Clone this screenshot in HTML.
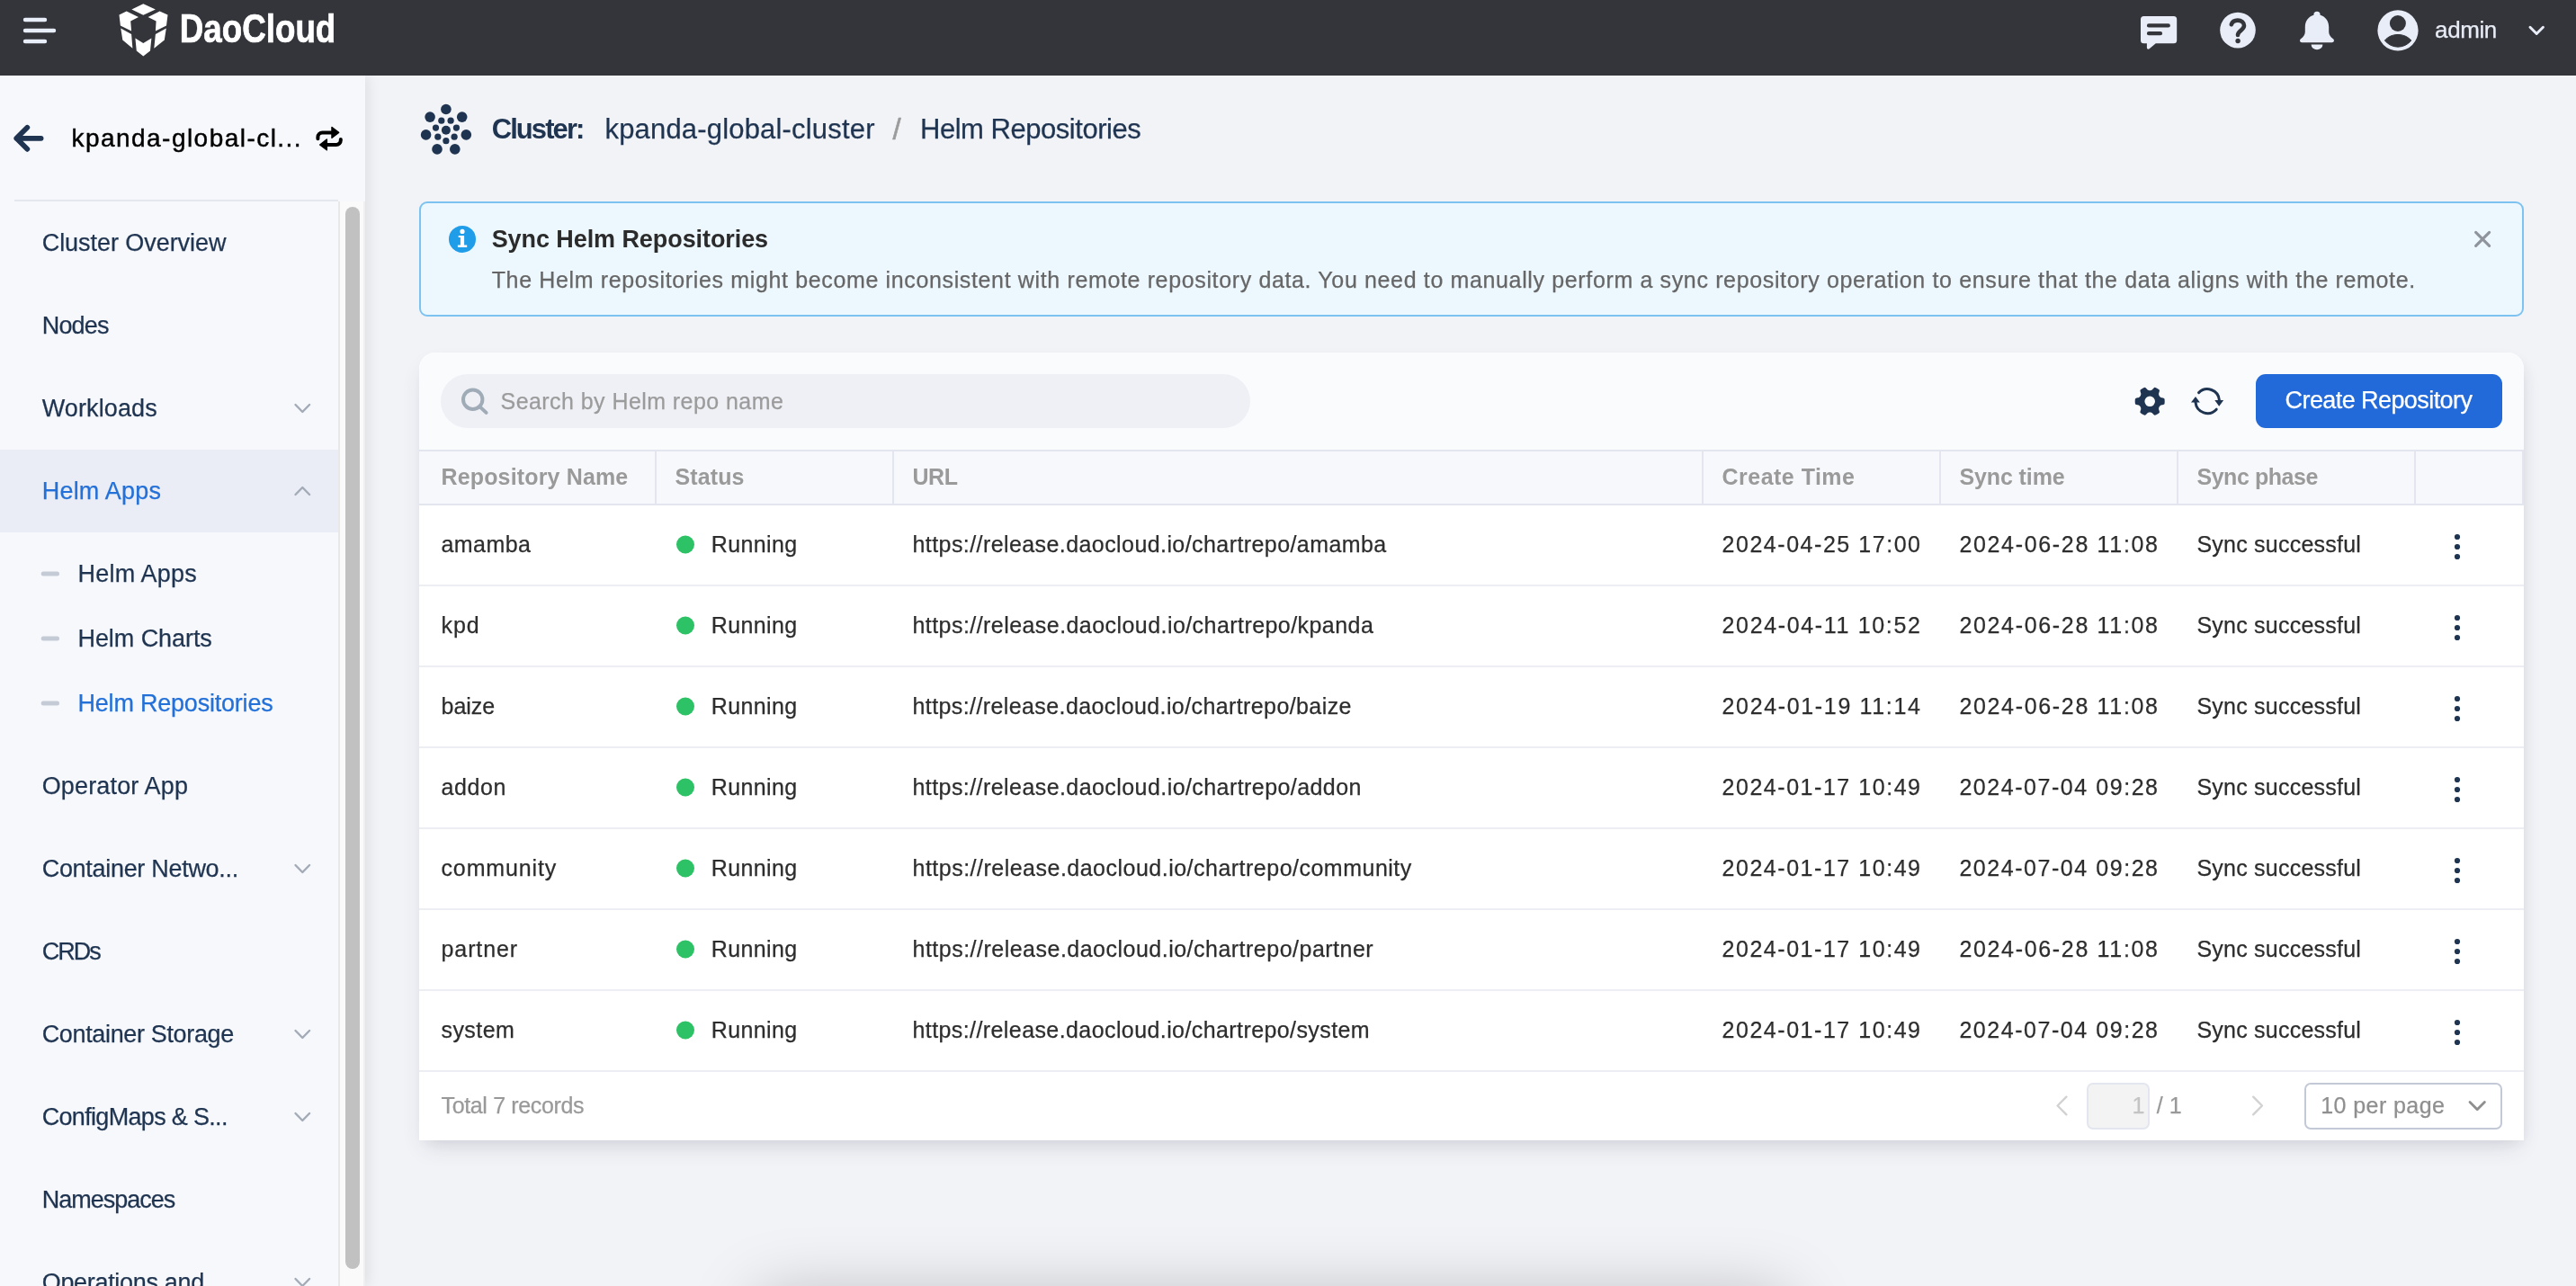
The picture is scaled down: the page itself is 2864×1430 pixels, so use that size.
<!DOCTYPE html>
<html lang="en"><head><meta charset="utf-8"><title>Helm Repositories</title>
<style>
html,body{margin:0;padding:0}
body{width:2864px;height:1430px;overflow:hidden;position:relative;background:#f2f3f7;font-family:"Liberation Sans",sans-serif}
.t{position:absolute;white-space:nowrap;line-height:normal;-webkit-text-stroke:0.25px currentColor}
.abs{position:absolute}
#hdr{left:0;top:0;width:2864px;height:84px;background:#34353b}
#side{left:0;top:84px;width:406px;height:1346px;background:#f7f8fc;box-shadow:3px 0 14px rgba(0,0,0,.085)}
#act{left:0;top:500px;width:376px;height:92px;background:#eaedf6}
#sline{left:16px;top:222px;width:360px;height:2px;background:#e4e7ee}
#vline{left:376px;top:224px;width:26px;height:1206px;background:#fafafa;border-left:2px solid #e8e8e9;border-right:2px solid #efeff0}
#thumb{left:384px;top:230px;width:16px;height:1181px;border-radius:8px;background:#c1c1c1}
#alert{left:466px;top:224px;width:2336px;height:124px;border:2px solid #7cc3f1;border-radius:9px;background:#edf7fe}
#card{left:466px;top:392px;width:2340px;height:876px;background:#fff;border-radius:18px 18px 0 0;box-shadow:0 12px 26px -6px rgba(50,55,75,.14),4px 6px 16px -6px rgba(50,55,75,.09);overflow:hidden}
#tool{left:0;top:0;width:2340px;height:108px;background:#fafbfd}
#thead{left:0;top:108px;width:2338px;height:58px;background:#f7f8fb;border-top:2px solid #e3e6ef;border-bottom:2px solid #e3e6ef;border-right:2px solid #e3e6ef}
.cs{position:absolute;top:502px;width:2px;height:58px;background:#e3e6ef}
.rl{position:absolute;left:466px;width:2340px;height:2px;background:#eceef3}
#search{left:490px;top:416px;width:900px;height:60px;border-radius:30px;background:#eff0f5}
#btn{left:2508px;top:416px;width:274px;height:60px;border-radius:11px;background:#2269d9}
#pgin{left:2320px;top:1204px;width:66px;height:48px;border:2px solid #e3e6ef;border-radius:7px;background:#f3f3f4}
#pgsel{left:2562px;top:1204px;width:216px;height:48px;border:2px solid #c3c9d7;border-radius:7px;background:#fff}
#bshadow{left:850px;top:1450px;width:1130px;height:60px;border-radius:12px;background:#888;box-shadow:0 0 75px 8px rgba(0,0,0,.25)}
#tx{position:absolute;left:0;top:0;width:2864px;height:1430px;will-change:transform}
svg{position:absolute;left:0;top:0;overflow:visible;will-change:transform}
</style></head><body>
<div class="abs" id="bshadow"></div>
<div class="abs" id="side"></div>
<div class="abs" id="act"></div>
<div class="abs" id="sline"></div>
<div class="abs" id="vline"></div>
<div class="abs" id="thumb"></div>
<div class="abs" id="hdr"></div>
<div class="abs" id="alert"></div>
<div class="abs" id="card"><div class="abs" id="tool"></div><div class="abs" id="thead"></div></div>
<div class="cs" style="left:728px"></div><div class="cs" style="left:992px"></div><div class="cs" style="left:1892px"></div><div class="cs" style="left:2156px"></div><div class="cs" style="left:2420px"></div><div class="cs" style="left:2684px"></div>
<div class="rl" style="top:650px"></div><div class="rl" style="top:740px"></div><div class="rl" style="top:830px"></div><div class="rl" style="top:920px"></div><div class="rl" style="top:1010px"></div><div class="rl" style="top:1100px"></div><div class="rl" style="top:1190px"></div>
<div class="abs" id="search"></div>
<div class="abs" id="btn"></div>
<div class="abs" id="pgin"></div>
<div class="abs" id="pgsel"></div>
<svg width="2864" height="1430" viewBox="0 0 2864 1430">
<!-- hamburger -->
<g stroke="#e9eefb" stroke-width="4.4" stroke-linecap="round"><path d="M28,22H50M28,34H60M28,46H50"/></g>
<!-- logo cube -->
<g fill="#fff">
<polygon points="159.3,4.3 172.9,10.5 159.3,16.8 146.4,10.5"/>
<polygon points="140.7,12.5 154,19 145.2,23.4 146.1,34.6 133.9,28.5 132.5,16.5"/>
<polygon points="177.6,12.5 186.5,16.5 185,28.5 172.9,34.6 173.6,23.4 164.6,19"/>
<polygon points="134.3,31.5 146.1,38 147.4,53.8 136.3,44.6"/>
<polygon points="184.8,31.5 172.9,38 171.3,53.8 182.8,44.6"/>
<polygon points="150.4,42.4 159.3,48 168.4,42.4 167,56.5 159.3,62.5 151.8,56.5"/>
</g>
<text x="199.8" y="46.5" font-family="Liberation Sans, sans-serif" font-weight="700" font-size="44" fill="#fff" stroke="#fff" stroke-width="0.7" textLength="173.5" lengthAdjust="spacingAndGlyphs">DaoCloud</text>
<!-- header icons -->
<g fill="#e9edf7">
<path d="M2383.5,18H2416.7a3.5,3.5 0 0 1 3.5,3.5V44.7a3.5,3.5 0 0 1 -3.5,3.5H2396.8L2389.6,54.2a1.6,1.6 0 0 1 -2.7,-1.2V48.2H2383.5a3.5,3.5 0 0 1 -3.5,-3.5V21.5a3.5,3.5 0 0 1 3.5,-3.5Z"/>
<circle cx="2488" cy="33.6" r="19.8"/>
<path d="M2576,12.8a3.6,3.6 0 0 1 3.6,3.6v0.3c5.8,1.6 9.6,6.8 9.6,13v5.8c0,3 1.6,5.2 4.8,7.8c1.7,1.5 1.1,3.9 -1.3,3.9h-33.4c-2.4,0 -3,-2.4 -1.3,-3.9c3.2,-2.6 4.8,-4.8 4.8,-7.8v-5.8c0,-6.2 3.8,-11.4 9.6,-13v-0.3a3.6,3.6 0 0 1 3.6,-3.6Z"/>
<path d="M2569.6,49.6h12.8a6.4,5.6 0 0 1 -12.8,0Z"/>
<circle cx="2666" cy="33.9" r="22.6"/>
</g>
<g stroke="#34353b" stroke-width="4.2" stroke-linecap="round" fill="none">
<path d="M2389,28.4H2410.8M2389,37.2H2402"/>
<path d="M2480.8,27.2c1,-3 3.8,-4.6 7,-4.6c4.2,0 7.2,2.6 7.2,6c0,5 -7,5.6 -7,10.4" stroke-width="4.6"/>
</g>
<circle cx="2488.1" cy="45.5" r="2.7" fill="#34353b"/>
<circle cx="2665.9" cy="26" r="9" fill="#34353b"/>
<path d="M2651.4,45C2655,40.6 2660.4,38.5 2666,38.5C2671.6,38.5 2677,40.6 2680.8,45A18.7,18.7 0 0 1 2651.4,45Z" fill="#34353b" stroke="#34353b" stroke-width="1" stroke-linejoin="round"/>
<path d="M2813,30.3L2820.2,37.5L2827.4,30.3" stroke="#e9edf7" stroke-width="3" fill="none" stroke-linecap="round" stroke-linejoin="round"/>
<!-- back arrow -->
<path d="M30.3,141.8L18.3,153.8L30.3,165.8M18.3,153.8H45.6" stroke="#1f3450" stroke-width="5.8" fill="none" stroke-linecap="round" stroke-linejoin="round"/>
<!-- swap icon -->
<g stroke="#000" stroke-width="4" fill="none" stroke-linecap="round" stroke-linejoin="round">
<path d="M353.4,154.2v-1.8a5,5 0 0 1 5,-5H370"/>
<path d="M378.8,155v1a5,5 0 0 1 -5,5H362.5"/>
</g>
<path d="M369,141.6L376.6,147.4L369,153.2Z" fill="#000" stroke="#000" stroke-width="1.5" stroke-linejoin="round"/>
<path d="M363.3,155.1L355.7,161L363.3,166.7Z" fill="#000" stroke="#000" stroke-width="1.5" stroke-linejoin="round"/>
<path d="M328.5,450L336.3,458L344.1,450" stroke="#a3abb7" stroke-width="2.4" fill="none" stroke-linecap="round" stroke-linejoin="round"/><path d="M328.5,550L336.3,542L344.1,550" stroke="#a3abb7" stroke-width="2.4" fill="none" stroke-linecap="round" stroke-linejoin="round"/><path d="M328.5,962L336.3,970L344.1,962" stroke="#a3abb7" stroke-width="2.4" fill="none" stroke-linecap="round" stroke-linejoin="round"/><path d="M328.5,1146L336.3,1154L344.1,1146" stroke="#a3abb7" stroke-width="2.4" fill="none" stroke-linecap="round" stroke-linejoin="round"/><path d="M328.5,1238L336.3,1246L344.1,1238" stroke="#a3abb7" stroke-width="2.4" fill="none" stroke-linecap="round" stroke-linejoin="round"/><path d="M328.5,1422L336.3,1430L344.1,1422" stroke="#a3abb7" stroke-width="2.4" fill="none" stroke-linecap="round" stroke-linejoin="round"/>
<rect x="45.7" y="635.5" width="20.3" height="5" rx="2.5" fill="#c5cbd6"/><rect x="45.7" y="707.5" width="20.3" height="5" rx="2.5" fill="#c5cbd6"/><rect x="45.7" y="779.5" width="20.3" height="5" rx="2.5" fill="#c5cbd6"/>
<!-- cluster icon -->
<g fill="#1f3450">
<circle cx="495.9" cy="144.7" r="5"/>
<circle cx="495.9" cy="121.5" r="5.8"/><circle cx="513.7" cy="130.1" r="5.8"/><circle cx="518.3" cy="149.9" r="5.8"/><circle cx="505.8" cy="165.9" r="5.8"/><circle cx="486" cy="165.9" r="5.8"/><circle cx="473.6" cy="149.9" r="5.8"/><circle cx="478.1" cy="130.1" r="5.8"/>
<circle cx="490.8" cy="134.2" r="3.6"/><circle cx="501.1" cy="134.2" r="3.6"/><circle cx="507.4" cy="142.1" r="3.6"/><circle cx="505.1" cy="152.2" r="3.6"/><circle cx="495.9" cy="156.7" r="3.6"/><circle cx="486.8" cy="152.2" r="3.6"/><circle cx="484.5" cy="142.1" r="3.6"/>
</g>
<!-- info icon -->
<circle cx="514" cy="265.9" r="15" fill="#209de9"/>
<circle cx="514" cy="257.4" r="2.6" fill="#fff"/>
<path d="M509.7,261.9H516.1V272.6H519.2V274.9H508.9V272.6H511.9V264H509.7Z" fill="#fff"/>
<!-- close x -->
<path d="M2752.6,258.4L2767.6,273.4M2767.6,258.4L2752.6,273.4" stroke="#8e939c" stroke-width="3.1" stroke-linecap="round"/>
<!-- search icon -->
<circle cx="525.7" cy="444.2" r="10.7" stroke="#a0abb8" stroke-width="4" fill="none"/>
<path d="M533.6,452.4L540.6,458.9" stroke="#a0abb8" stroke-width="4" stroke-linecap="round"/>
<!-- gear -->
<path d="M2406.70,446.30L2406.70,446.59L2406.69,446.88L2406.68,447.16L2406.66,447.45L2406.64,447.74L2406.61,448.02L2406.58,448.31L2406.54,448.60L2406.50,448.88L2406.45,449.17L2406.23,449.42L2405.89,449.64L2405.47,449.83L2405.00,449.99L2404.49,450.13L2403.95,450.24L2403.38,450.33L2402.95,450.44L2402.62,450.58L2402.35,450.72L2402.10,450.87L2401.89,451.02L2401.69,451.18L2401.51,451.34L2401.35,451.50L2401.20,451.66L2401.06,451.83L2400.93,452.01L2400.81,452.18L2400.70,452.36L2400.60,452.55L2400.51,452.74L2400.42,452.94L2400.35,453.14L2400.28,453.36L2400.22,453.58L2400.17,453.81L2400.13,454.06L2400.11,454.32L2400.10,454.61L2400.12,454.92L2400.16,455.27L2400.28,455.70L2400.49,456.24L2400.66,456.76L2400.80,457.28L2400.89,457.76L2400.93,458.22L2400.92,458.63L2400.81,458.94L2400.58,459.12L2400.36,459.30L2400.13,459.48L2399.90,459.65L2399.66,459.82L2399.43,459.98L2399.19,460.14L2398.94,460.29L2398.70,460.44L2398.45,460.59L2398.20,460.73L2397.95,460.87L2397.69,461.00L2397.43,461.13L2397.17,461.25L2396.91,461.37L2396.65,461.49L2396.38,461.60L2396.11,461.70L2395.84,461.80L2395.52,461.75L2395.16,461.56L2394.78,461.29L2394.41,460.97L2394.03,460.59L2393.66,460.18L2393.30,459.73L2392.99,459.42L2392.71,459.20L2392.44,459.03L2392.19,458.89L2391.95,458.78L2391.72,458.69L2391.49,458.62L2391.27,458.56L2391.05,458.51L2390.84,458.47L2390.62,458.45L2390.41,458.43L2390.20,458.43L2389.99,458.43L2389.78,458.45L2389.56,458.47L2389.35,458.51L2389.13,458.56L2388.91,458.62L2388.68,458.69L2388.45,458.78L2388.21,458.89L2387.96,459.03L2387.69,459.20L2387.41,459.42L2387.10,459.73L2386.74,460.18L2386.37,460.59L2385.99,460.97L2385.62,461.29L2385.24,461.56L2384.88,461.75L2384.56,461.80L2384.29,461.70L2384.02,461.60L2383.75,461.49L2383.49,461.37L2383.23,461.25L2382.97,461.13L2382.71,461.00L2382.45,460.87L2382.20,460.73L2381.95,460.59L2381.70,460.44L2381.46,460.29L2381.21,460.14L2380.97,459.98L2380.74,459.82L2380.50,459.65L2380.27,459.48L2380.04,459.30L2379.82,459.12L2379.59,458.94L2379.48,458.63L2379.47,458.22L2379.51,457.76L2379.60,457.28L2379.74,456.76L2379.91,456.24L2380.12,455.70L2380.24,455.27L2380.28,454.92L2380.30,454.61L2380.29,454.32L2380.27,454.06L2380.23,453.81L2380.18,453.58L2380.12,453.36L2380.05,453.14L2379.98,452.94L2379.89,452.74L2379.80,452.55L2379.70,452.36L2379.59,452.18L2379.47,452.01L2379.34,451.83L2379.20,451.66L2379.05,451.50L2378.89,451.34L2378.71,451.18L2378.51,451.02L2378.30,450.87L2378.05,450.72L2377.78,450.58L2377.45,450.44L2377.02,450.33L2376.45,450.24L2375.91,450.13L2375.40,449.99L2374.93,449.83L2374.51,449.64L2374.17,449.42L2373.95,449.17L2373.90,448.88L2373.86,448.60L2373.82,448.31L2373.79,448.02L2373.76,447.74L2373.74,447.45L2373.72,447.16L2373.71,446.88L2373.70,446.59L2373.70,446.30L2373.70,446.01L2373.71,445.72L2373.72,445.44L2373.74,445.15L2373.76,444.86L2373.79,444.58L2373.82,444.29L2373.86,444.00L2373.90,443.72L2373.95,443.43L2374.17,443.18L2374.51,442.96L2374.93,442.77L2375.40,442.61L2375.91,442.47L2376.45,442.36L2377.02,442.27L2377.45,442.16L2377.78,442.02L2378.05,441.88L2378.30,441.73L2378.51,441.58L2378.71,441.42L2378.89,441.26L2379.05,441.10L2379.20,440.94L2379.34,440.77L2379.47,440.59L2379.59,440.42L2379.70,440.24L2379.80,440.05L2379.89,439.86L2379.98,439.66L2380.05,439.46L2380.12,439.24L2380.18,439.02L2380.23,438.79L2380.27,438.54L2380.29,438.28L2380.30,437.99L2380.28,437.68L2380.24,437.33L2380.12,436.90L2379.91,436.36L2379.74,435.84L2379.60,435.32L2379.51,434.84L2379.47,434.38L2379.48,433.97L2379.59,433.66L2379.82,433.48L2380.04,433.30L2380.27,433.12L2380.50,432.95L2380.74,432.78L2380.97,432.62L2381.21,432.46L2381.46,432.31L2381.70,432.16L2381.95,432.01L2382.20,431.87L2382.45,431.73L2382.71,431.60L2382.97,431.47L2383.23,431.35L2383.49,431.23L2383.75,431.11L2384.02,431.00L2384.29,430.90L2384.56,430.80L2384.88,430.85L2385.24,431.04L2385.62,431.31L2385.99,431.63L2386.37,432.01L2386.74,432.42L2387.10,432.87L2387.41,433.18L2387.69,433.40L2387.96,433.57L2388.21,433.71L2388.45,433.82L2388.68,433.91L2388.91,433.98L2389.13,434.04L2389.35,434.09L2389.56,434.13L2389.78,434.15L2389.99,434.17L2390.20,434.17L2390.41,434.17L2390.62,434.15L2390.84,434.13L2391.05,434.09L2391.27,434.04L2391.49,433.98L2391.72,433.91L2391.95,433.82L2392.19,433.71L2392.44,433.57L2392.71,433.40L2392.99,433.18L2393.30,432.87L2393.66,432.42L2394.03,432.01L2394.41,431.63L2394.78,431.31L2395.16,431.04L2395.52,430.85L2395.84,430.80L2396.11,430.90L2396.38,431.00L2396.65,431.11L2396.91,431.23L2397.17,431.35L2397.43,431.47L2397.69,431.60L2397.95,431.73L2398.20,431.87L2398.45,432.01L2398.70,432.16L2398.94,432.31L2399.19,432.46L2399.43,432.62L2399.66,432.78L2399.90,432.95L2400.13,433.12L2400.36,433.30L2400.58,433.48L2400.81,433.66L2400.92,433.97L2400.93,434.38L2400.89,434.84L2400.80,435.32L2400.66,435.84L2400.49,436.36L2400.28,436.90L2400.16,437.33L2400.12,437.68L2400.10,437.99L2400.11,438.28L2400.13,438.54L2400.17,438.79L2400.22,439.02L2400.28,439.24L2400.35,439.46L2400.42,439.66L2400.51,439.86L2400.60,440.05L2400.70,440.24L2400.81,440.42L2400.93,440.59L2401.06,440.77L2401.20,440.94L2401.35,441.10L2401.51,441.26L2401.69,441.42L2401.89,441.58L2402.10,441.73L2402.35,441.88L2402.62,442.02L2402.95,442.16L2403.38,442.27L2403.95,442.36L2404.49,442.47L2405.00,442.61L2405.47,442.77L2405.89,442.96L2406.23,443.18L2406.45,443.43L2406.50,443.72L2406.54,444.00L2406.58,444.29L2406.61,444.58L2406.64,444.86L2406.66,445.15L2406.68,445.44L2406.69,445.72L2406.70,446.01ZM2396.00,446.30A5.8,5.8 0 1,0 2384.40,446.30A5.8,5.8 0 1,0 2396.00,446.30Z" fill="#1f3450" fill-rule="evenodd"/>
<!-- refresh -->
<g stroke="#1f3450" stroke-width="3" fill="none" stroke-linecap="round">
<path d="M2444.6,436.6A13.4,13.4 0 0 1 2467.4,445"/>
<path d="M2441,447.4A13.4,13.4 0 0 0 2464.2,455.2"/>
</g>
<path d="M2462.3,445H2472.2L2467.2,451.7Z" fill="#1f3450"/>
<path d="M2436,447.6H2445.9L2441,440.9Z" fill="#1f3450"/>
<!-- status dots -->
<g fill="#2dc265"><circle cx="762" cy="605.5" r="10"/><circle cx="762" cy="695.5" r="10"/><circle cx="762" cy="785.5" r="10"/><circle cx="762" cy="875.5" r="10"/><circle cx="762" cy="965.5" r="10"/><circle cx="762" cy="1055.5" r="10"/><circle cx="762" cy="1145.5" r="10"/></g>
<g fill="#1f3450"><circle cx="2732" cy="597" r="3.1"/><circle cx="2732" cy="608" r="3.1"/><circle cx="2732" cy="619" r="3.1"/><circle cx="2732" cy="687" r="3.1"/><circle cx="2732" cy="698" r="3.1"/><circle cx="2732" cy="709" r="3.1"/><circle cx="2732" cy="777" r="3.1"/><circle cx="2732" cy="788" r="3.1"/><circle cx="2732" cy="799" r="3.1"/><circle cx="2732" cy="867" r="3.1"/><circle cx="2732" cy="878" r="3.1"/><circle cx="2732" cy="889" r="3.1"/><circle cx="2732" cy="957" r="3.1"/><circle cx="2732" cy="968" r="3.1"/><circle cx="2732" cy="979" r="3.1"/><circle cx="2732" cy="1047" r="3.1"/><circle cx="2732" cy="1058" r="3.1"/><circle cx="2732" cy="1069" r="3.1"/><circle cx="2732" cy="1137" r="3.1"/><circle cx="2732" cy="1148" r="3.1"/><circle cx="2732" cy="1159" r="3.1"/></g>
<!-- pagination arrows -->
<path d="M2297.4,1219.7L2287.6,1229.5L2297.4,1239.3" stroke="#d2d2d2" stroke-width="2.4" fill="none" stroke-linecap="round" stroke-linejoin="round"/>
<path d="M2505.2,1219.7L2515,1229.5L2505.2,1239.3" stroke="#d2d2d2" stroke-width="2.4" fill="none" stroke-linecap="round" stroke-linejoin="round"/>
<path d="M2746,1225.5L2754.2,1233.7L2762.4,1225.5" stroke="#8f8f8f" stroke-width="2.8" fill="none" stroke-linecap="round" stroke-linejoin="round"/>
</svg>
<div id="tx"><div class="t " style="left:46.7px;top:255.0px;font-size:27px;color:#1f3450;letter-spacing:-0.05px;">Cluster Overview</div>
<div class="t " style="left:46.7px;top:347.0px;font-size:27px;color:#1f3450;letter-spacing:-0.81px;">Nodes</div>
<div class="t " style="left:46.7px;top:439.0px;font-size:27px;color:#1f3450;letter-spacing:0.12px;">Workloads</div>
<div class="t " style="left:46.7px;top:531.0px;font-size:27px;color:#2370d8;letter-spacing:0.22px;">Helm Apps</div>
<div class="t " style="left:86.5px;top:623.0px;font-size:27px;color:#1f3450;letter-spacing:0.22px;">Helm Apps</div>
<div class="t " style="left:86.5px;top:695.0px;font-size:27px;color:#1f3450;letter-spacing:-0.07px;">Helm Charts</div>
<div class="t " style="left:86.5px;top:767.0px;font-size:27px;color:#2370d8;letter-spacing:-0.21px;">Helm Repositories</div>
<div class="t " style="left:46.7px;top:859.0px;font-size:27px;color:#1f3450;letter-spacing:0.15px;">Operator App</div>
<div class="t " style="left:46.7px;top:951.0px;font-size:27px;color:#1f3450;letter-spacing:-0.30px;">Container Netwo...</div>
<div class="t " style="left:46.7px;top:1043.0px;font-size:27px;color:#1f3450;letter-spacing:-2.00px;">CRDs</div>
<div class="t " style="left:46.7px;top:1135.0px;font-size:27px;color:#1f3450;letter-spacing:-0.35px;">Container Storage</div>
<div class="t " style="left:46.7px;top:1227.0px;font-size:27px;color:#1f3450;letter-spacing:-0.68px;">ConfigMaps &amp; S...</div>
<div class="t " style="left:46.7px;top:1319.0px;font-size:27px;color:#1f3450;letter-spacing:-1.00px;">Namespaces</div>
<div class="t " style="left:46.7px;top:1411.0px;font-size:27px;color:#1f3450;letter-spacing:-0.31px;">Operations and</div>
<div class="t " style="left:79.5px;top:138.0px;font-size:28px;color:#000;letter-spacing:1.46px;-webkit-text-stroke:0.45px currentColor;">kpanda-global-cl...</div>
<div class="t " style="left:2707.1px;top:17.7px;font-size:26px;color:#e9edf7;letter-spacing:-0.40px;">admin</div>
<div class="t " style="left:546.7px;top:126.0px;font-size:31px;color:#1f3450;letter-spacing:-1.92px;font-weight:700;-webkit-text-stroke:0;">Cluster:</div>
<div class="t " style="left:672.5px;top:126.0px;font-size:31px;color:#1f3450;letter-spacing:0.18px;">kpanda-global-cluster</div>
<div class="t " style="left:992.6px;top:124.6px;font-size:33px;color:#9b9b9b;-webkit-text-stroke:0.6px currentColor;">/</div>
<div class="t " style="left:1023.0px;top:126.0px;font-size:31px;color:#1f3450;letter-spacing:-0.47px;">Helm Repositories</div>
<div class="t " style="left:546.7px;top:251.4px;font-size:27px;color:#2b2b2b;letter-spacing:-0.08px;font-weight:700;-webkit-text-stroke:0;">Sync Helm Repositories</div>
<div class="t " style="left:546.7px;top:297.0px;font-size:25px;color:#666;letter-spacing:0.64px;">The Helm repositories might become inconsistent with remote repository data. You need to manually perform a sync repository operation to ensure that the data aligns with the remote.</div>
<div class="t " style="left:556.6px;top:432.0px;font-size:25px;color:#9b9b9b;letter-spacing:0.43px;">Search by Helm repo name</div>
<div class="t " style="left:2540.6px;top:430.0px;font-size:27px;color:#fff;letter-spacing:-0.58px;">Create Repository</div>
<div class="t " style="left:490.5px;top:516.0px;font-size:25px;color:#9a9a9a;letter-spacing:0.15px;font-weight:700;-webkit-text-stroke:0;">Repository Name</div>
<div class="t " style="left:750.6px;top:516.0px;font-size:25px;color:#9a9a9a;letter-spacing:0.08px;font-weight:700;-webkit-text-stroke:0;">Status</div>
<div class="t " style="left:1014.5px;top:516.0px;font-size:25px;color:#9a9a9a;letter-spacing:-0.44px;font-weight:700;-webkit-text-stroke:0;">URL</div>
<div class="t " style="left:1914.5px;top:516.0px;font-size:25px;color:#9a9a9a;letter-spacing:0.48px;font-weight:700;-webkit-text-stroke:0;">Create Time</div>
<div class="t " style="left:2178.4px;top:516.0px;font-size:25px;color:#9a9a9a;letter-spacing:-0.10px;font-weight:700;-webkit-text-stroke:0;">Sync time</div>
<div class="t " style="left:2442.4px;top:516.0px;font-size:25px;color:#9a9a9a;letter-spacing:-0.43px;font-weight:700;-webkit-text-stroke:0;">Sync phase</div>
<div class="t " style="left:490.5px;top:591.0px;font-size:25px;color:#2d2d2d;letter-spacing:0.43px;">amamba</div>
<div class="t " style="left:790.7px;top:591.0px;font-size:25px;color:#2d2d2d;letter-spacing:0.41px;">Running</div>
<div class="t " style="left:1014.5px;top:591.0px;font-size:25px;color:#2d2d2d;letter-spacing:0.42px;">https://release.daocloud.io/chartrepo/amamba</div>
<div class="t " style="left:1914.5px;top:591.0px;font-size:25px;color:#2d2d2d;letter-spacing:1.54px;">2024-04-25 17:00</div>
<div class="t " style="left:2178.4px;top:591.0px;font-size:25px;color:#2d2d2d;letter-spacing:1.67px;">2024-06-28 11:08</div>
<div class="t " style="left:2442.4px;top:591.0px;font-size:25px;color:#2d2d2d;letter-spacing:0.23px;">Sync successful</div>
<div class="t " style="left:490.5px;top:681.0px;font-size:25px;color:#2d2d2d;letter-spacing:0.90px;">kpd</div>
<div class="t " style="left:790.7px;top:681.0px;font-size:25px;color:#2d2d2d;letter-spacing:0.41px;">Running</div>
<div class="t " style="left:1014.5px;top:681.0px;font-size:25px;color:#2d2d2d;letter-spacing:0.44px;">https://release.daocloud.io/chartrepo/kpanda</div>
<div class="t " style="left:1914.5px;top:681.0px;font-size:25px;color:#2d2d2d;letter-spacing:1.66px;">2024-04-11 10:52</div>
<div class="t " style="left:2178.4px;top:681.0px;font-size:25px;color:#2d2d2d;letter-spacing:1.67px;">2024-06-28 11:08</div>
<div class="t " style="left:2442.4px;top:681.0px;font-size:25px;color:#2d2d2d;letter-spacing:0.23px;">Sync successful</div>
<div class="t " style="left:490.5px;top:771.0px;font-size:25px;color:#2d2d2d;letter-spacing:-0.02px;">baize</div>
<div class="t " style="left:790.7px;top:771.0px;font-size:25px;color:#2d2d2d;letter-spacing:0.41px;">Running</div>
<div class="t " style="left:1014.5px;top:771.0px;font-size:25px;color:#2d2d2d;letter-spacing:0.40px;">https://release.daocloud.io/chartrepo/baize</div>
<div class="t " style="left:1914.5px;top:771.0px;font-size:25px;color:#2d2d2d;letter-spacing:1.66px;">2024-01-19 11:14</div>
<div class="t " style="left:2178.4px;top:771.0px;font-size:25px;color:#2d2d2d;letter-spacing:1.67px;">2024-06-28 11:08</div>
<div class="t " style="left:2442.4px;top:771.0px;font-size:25px;color:#2d2d2d;letter-spacing:0.23px;">Sync successful</div>
<div class="t " style="left:490.5px;top:861.0px;font-size:25px;color:#2d2d2d;letter-spacing:0.62px;">addon</div>
<div class="t " style="left:790.7px;top:861.0px;font-size:25px;color:#2d2d2d;letter-spacing:0.41px;">Running</div>
<div class="t " style="left:1014.5px;top:861.0px;font-size:25px;color:#2d2d2d;letter-spacing:0.43px;">https://release.daocloud.io/chartrepo/addon</div>
<div class="t " style="left:1914.5px;top:861.0px;font-size:25px;color:#2d2d2d;letter-spacing:1.54px;">2024-01-17 10:49</div>
<div class="t " style="left:2178.4px;top:861.0px;font-size:25px;color:#2d2d2d;letter-spacing:1.55px;">2024-07-04 09:28</div>
<div class="t " style="left:2442.4px;top:861.0px;font-size:25px;color:#2d2d2d;letter-spacing:0.23px;">Sync successful</div>
<div class="t " style="left:490.5px;top:951.0px;font-size:25px;color:#2d2d2d;letter-spacing:0.87px;">community</div>
<div class="t " style="left:790.7px;top:951.0px;font-size:25px;color:#2d2d2d;letter-spacing:0.41px;">Running</div>
<div class="t " style="left:1014.5px;top:951.0px;font-size:25px;color:#2d2d2d;letter-spacing:0.49px;">https://release.daocloud.io/chartrepo/community</div>
<div class="t " style="left:1914.5px;top:951.0px;font-size:25px;color:#2d2d2d;letter-spacing:1.54px;">2024-01-17 10:49</div>
<div class="t " style="left:2178.4px;top:951.0px;font-size:25px;color:#2d2d2d;letter-spacing:1.55px;">2024-07-04 09:28</div>
<div class="t " style="left:2442.4px;top:951.0px;font-size:25px;color:#2d2d2d;letter-spacing:0.23px;">Sync successful</div>
<div class="t " style="left:490.5px;top:1041.0px;font-size:25px;color:#2d2d2d;letter-spacing:0.91px;">partner</div>
<div class="t " style="left:790.7px;top:1041.0px;font-size:25px;color:#2d2d2d;letter-spacing:0.41px;">Running</div>
<div class="t " style="left:1014.5px;top:1041.0px;font-size:25px;color:#2d2d2d;letter-spacing:0.49px;">https://release.daocloud.io/chartrepo/partner</div>
<div class="t " style="left:1914.5px;top:1041.0px;font-size:25px;color:#2d2d2d;letter-spacing:1.54px;">2024-01-17 10:49</div>
<div class="t " style="left:2178.4px;top:1041.0px;font-size:25px;color:#2d2d2d;letter-spacing:1.67px;">2024-06-28 11:08</div>
<div class="t " style="left:2442.4px;top:1041.0px;font-size:25px;color:#2d2d2d;letter-spacing:0.23px;">Sync successful</div>
<div class="t " style="left:490.5px;top:1131.0px;font-size:25px;color:#2d2d2d;letter-spacing:0.42px;">system</div>
<div class="t " style="left:790.7px;top:1131.0px;font-size:25px;color:#2d2d2d;letter-spacing:0.41px;">Running</div>
<div class="t " style="left:1014.5px;top:1131.0px;font-size:25px;color:#2d2d2d;letter-spacing:0.41px;">https://release.daocloud.io/chartrepo/system</div>
<div class="t " style="left:1914.5px;top:1131.0px;font-size:25px;color:#2d2d2d;letter-spacing:1.54px;">2024-01-17 10:49</div>
<div class="t " style="left:2178.4px;top:1131.0px;font-size:25px;color:#2d2d2d;letter-spacing:1.55px;">2024-07-04 09:28</div>
<div class="t " style="left:2442.4px;top:1131.0px;font-size:25px;color:#2d2d2d;letter-spacing:0.23px;">Sync successful</div>
<div class="t " style="left:490.5px;top:1214.6px;font-size:25px;color:#999;letter-spacing:-0.35px;">Total 7 records</div>
<div class="t " style="left:2370.6px;top:1214.6px;font-size:25px;color:#c4c4c4;">1</div>
<div class="t " style="left:2397.8px;top:1214.6px;font-size:25px;color:#999;letter-spacing:0.05px;">/ 1</div>
<div class="t " style="left:2580.2px;top:1214.6px;font-size:25px;color:#8f8f8f;letter-spacing:0.43px;">10 per page</div></div>
</body></html>
